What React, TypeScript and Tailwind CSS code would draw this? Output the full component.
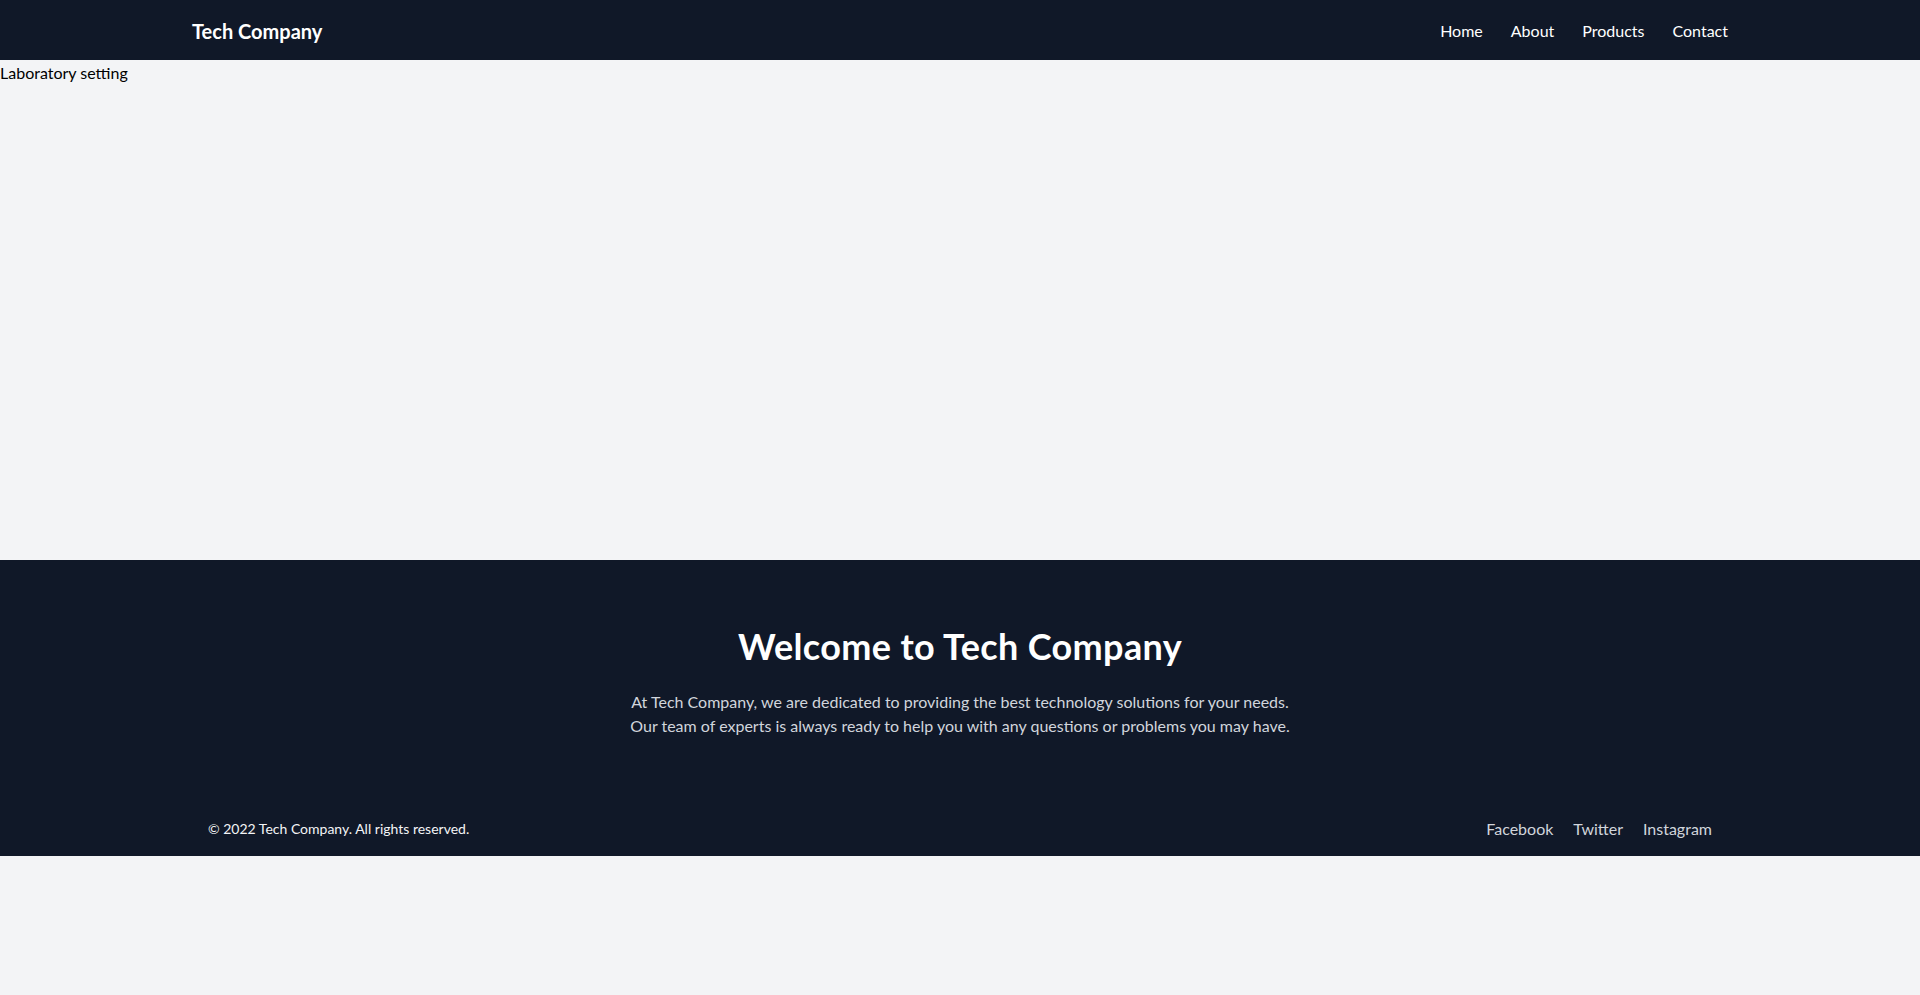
export default function App() {
  return (
    <div className="min-h-screen bg-gray-100 font-['Lato',sans-serif] text-black">
      <header className="bg-gray-900 text-white">
        <div className="container mx-auto flex h-[60px] items-center justify-between pt-[2px]">
          <h1 className="text-xl font-bold">Tech Company</h1>
          <nav className="flex items-center gap-7 text-base">
            <a href="#">Home</a>
            <a href="#">About</a>
            <a href="#">Products</a>
            <a href="#">Contact</a>
          </nav>
        </div>
      </header>

      <main>
        <div className="h-[500px] w-full pt-px">
          <span className="text-base">Laboratory setting</span>
        </div>

        <section className="bg-gray-900 text-white">
          <div className="container mx-auto px-4 pt-[66px] pb-[62px] text-center">
            <h2 className="mb-6 text-4xl font-bold tracking-[0.01em]">Welcome to Tech Company</h2>
            <p className="mx-auto max-w-2xl text-base text-gray-300">
              At Tech Company, we are dedicated to providing the best technology solutions for your needs. Our
              team of experts is always ready to help you with any questions or problems you may have.
            </p>
          </div>
          <footer className="container mx-auto flex items-center justify-between px-4 pt-[17px] pb-[15px]">
            <p className="text-sm text-gray-100">© 2022 Tech Company. All rights reserved.</p>
            <div className="flex items-center gap-5 text-base text-gray-300">
              <a href="#">Facebook</a>
              <a href="#">Twitter</a>
              <a href="#">Instagram</a>
            </div>
          </footer>
        </section>
      </main>
    </div>
  );
}
